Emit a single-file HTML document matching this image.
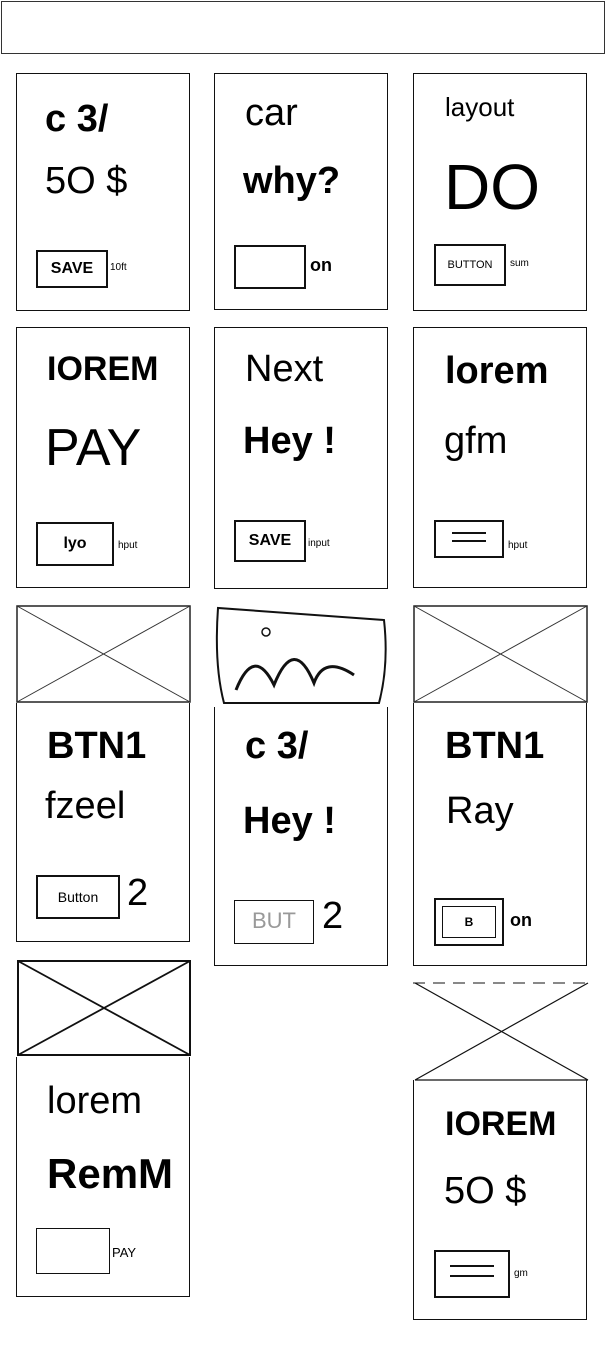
<!DOCTYPE html>
<html><head><meta charset="utf-8"><style>
body{margin:0;width:606px;height:1352px;background:#fff;position:relative;overflow:hidden;font-family:"Liberation Sans",sans-serif}
.b{position:absolute;border:1.5px solid #111;box-sizing:border-box}
.t{position:absolute;color:#000;white-space:nowrap}
.big{font-size:38px;font-weight:bold}
.mid{font-size:38px}
.btn{position:absolute;border:2px solid #111;font-size:16px;font-weight:bold;text-align:center;box-sizing:border-box}
.sm{position:absolute;font-size:10px}
svg{position:absolute}
</style></head><body>
<div class="b" style="left:1px;top:1px;width:604px;height:53px;border-color:#333"></div>

<!-- column 1 -->
<div class="b" style="left:16px;top:73px;width:174px;height:238px"></div>
<div class="t big" style="left:45px;top:98px">c 3/</div>
<div class="t mid" style="left:45px;top:160px">5O $</div>
<div class="btn" style="left:36px;top:250px;width:72px;height:38px;line-height:34px">SAVE</div>
<div class="sm" style="left:110px;top:262px">10ft</div>

<div class="b" style="left:16px;top:327px;width:174px;height:261px"></div>
<div class="t big" style="left:47px;top:350px;font-size:34px">IOREM</div>
<div class="t big" style="left:45px;top:418px;font-size:52px;font-weight:normal">PAY</div>
<div class="btn" style="left:36px;top:522px;width:78px;height:44px;line-height:40px">lyo</div>
<div class="sm" style="left:118px;top:540px">hput</div>

<svg style="left:16px;top:605px" width="175" height="98"><rect x="1" y="1" width="173" height="96" fill="none" stroke="#222" stroke-width="1.5"/><path d="M1 1L174 97M174 1L1 97" stroke="#333" stroke-width="1"/></svg>
<div class="b" style="left:16px;top:703px;width:174px;height:239px;border-top:none"></div>
<div class="t big" style="left:47px;top:725px">BTN1</div>
<div class="t mid" style="left:45px;top:785px">fzeel</div>
<div class="btn" style="left:36px;top:875px;width:84px;height:44px;line-height:40px;font-weight:normal;font-size:14px">Button</div>
<div class="t" style="left:127px;top:872px;font-size:38px">2</div>

<svg style="left:16px;top:959px" width="176" height="98"><rect x="2" y="2" width="172" height="94" fill="none" stroke="#111" stroke-width="2"/><path d="M2 2L174 96M174 2L2 96" stroke="#111" stroke-width="1.8"/></svg>
<div class="b" style="left:16px;top:1057px;width:174px;height:240px;border-top:none"></div>
<div class="t big" style="left:47px;top:1080px;font-weight:normal">lorem</div>
<div class="t big" style="left:47px;top:1150px;font-size:42px">RemM</div>
<div class="btn" style="left:36px;top:1228px;width:74px;height:46px;border-width:1px"></div>
<div class="sm" style="left:112px;top:1245px;font-size:13px">PAY</div>

<!-- column 2 -->
<div class="b" style="left:214px;top:73px;width:174px;height:237px"></div>
<div class="t mid" style="left:245px;top:92px">car</div>
<div class="t big" style="left:243px;top:160px">why?</div>
<div class="btn" style="left:234px;top:245px;width:72px;height:44px"></div>
<div class="t" style="left:310px;top:255px;font-size:18px;font-weight:bold">on</div>

<div class="b" style="left:214px;top:327px;width:174px;height:262px"></div>
<div class="t mid" style="left:245px;top:348px">Next</div>
<div class="t big" style="left:243px;top:420px">Hey !</div>
<div class="btn" style="left:234px;top:520px;width:72px;height:42px;line-height:38px">SAVE</div>
<div class="sm" style="left:308px;top:538px">input</div>

<svg style="left:214px;top:605px" width="176" height="102"><path d="M4 3Q0 60 10 98H165Q175 60 170 15Z" fill="none" stroke="#111" stroke-width="2"/><circle cx="52" cy="27" r="4" fill="none" stroke="#111" stroke-width="1.5"/><path d="M22 85Q40 40 60 80Q80 30 100 78Q110 50 140 70" fill="none" stroke="#111" stroke-width="3"/></svg>
<div class="b" style="left:214px;top:707px;width:174px;height:259px;border-top:none"></div>
<div class="t big" style="left:245px;top:725px">c 3/</div>
<div class="t big" style="left:243px;top:800px">Hey !</div>
<div class="btn" style="left:234px;top:900px;width:80px;height:44px;line-height:40px;border-width:1px;color:#999;font-weight:normal;font-size:22px">BUT</div>
<div class="t" style="left:322px;top:895px;font-size:38px">2</div>

<!-- column 3 -->
<div class="b" style="left:413px;top:73px;width:174px;height:238px"></div>
<div class="t" style="left:445px;top:92px;font-size:26px">layout</div>
<div class="t" style="left:444px;top:150px;font-size:64px">DO</div>
<div class="btn" style="left:434px;top:244px;width:72px;height:42px;line-height:38px;font-size:11px;font-weight:normal">BUTTON</div>
<div class="sm" style="left:510px;top:258px">sum</div>

<div class="b" style="left:413px;top:327px;width:174px;height:261px"></div>
<div class="t big" style="left:445px;top:350px">lorem</div>
<div class="t mid" style="left:444px;top:420px">gfm</div>
<div class="btn" style="left:434px;top:520px;width:70px;height:38px"><div style="margin:10px 16px;border-top:2px solid #111;border-bottom:2px solid #111;height:6px"></div></div>
<div class="sm" style="left:508px;top:540px">hput</div>

<svg style="left:413px;top:605px" width="175" height="98"><rect x="1" y="1" width="173" height="96" fill="none" stroke="#222" stroke-width="1.5"/><path d="M1 1L174 97M174 1L1 97" stroke="#333" stroke-width="1"/></svg>
<div class="b" style="left:413px;top:703px;width:174px;height:263px;border-top:none"></div>
<div class="t big" style="left:445px;top:725px">BTN1</div>
<div class="t mid" style="left:446px;top:790px">Ray</div>
<div class="btn" style="left:434px;top:898px;width:70px;height:48px;padding:6px"><div style="border:1.5px solid #111;height:30px;font-size:12px;line-height:30px">B</div></div>
<div class="t" style="left:510px;top:910px;font-size:18px;font-weight:bold">on</div>

<svg style="left:413px;top:982px" width="176" height="100"><path d="M0 1H176" stroke="#111" stroke-dasharray="12 8"/><path d="M2 1L175 98M175 1L2 98M2 98H175" stroke="#111" stroke-width="1.2"/></svg>
<div class="b" style="left:413px;top:1080px;width:174px;height:240px;border-top:none"></div>
<div class="t big" style="left:445px;top:1105px;font-size:34px">IOREM</div>
<div class="t mid" style="left:444px;top:1170px">5O $</div>
<div class="btn" style="left:434px;top:1250px;width:76px;height:48px"><div style="margin:13px 14px;border-top:2px solid #111;border-bottom:2px solid #111;height:8px"></div></div>
<div class="sm" style="left:514px;top:1268px">gm</div>
</body></html>
